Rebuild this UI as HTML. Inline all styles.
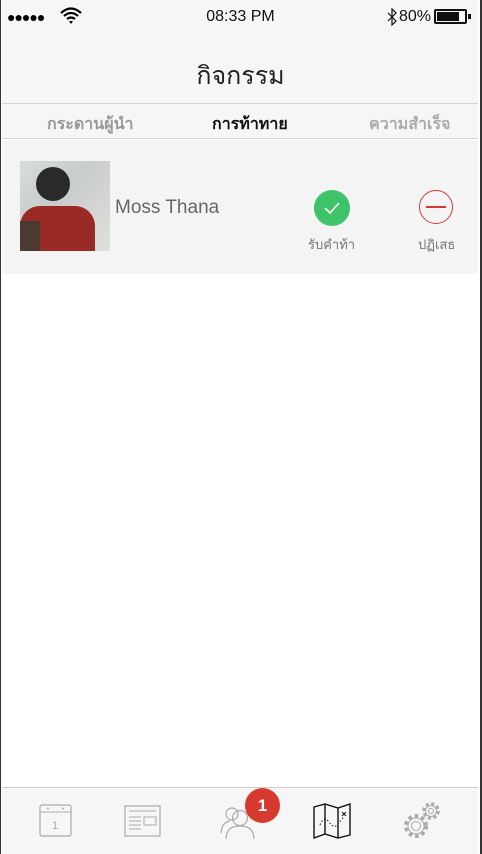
<!DOCTYPE html>
<html><head><meta charset="utf-8"><style>
*{margin:0;padding:0;box-sizing:border-box}
body{width:482px;height:854px;background:#fff;font-family:"Liberation Sans","Noto Sans CJK SC",sans-serif;position:relative;overflow:hidden;border-left:1px solid #333;border-right:2px solid #333}
.abs{position:absolute}
</style></head><body>
<div class="abs" style="left:1px;right:2px;top:0;height:103px;background:#f6f6f6"></div>
<div class="abs" style="left:6px;top:9px;font-size:14px;letter-spacing:-1px;color:#000">●●●●●</div>
<svg class="abs" style="left:59px;top:7px" width="22" height="18" viewBox="0 0 22 18"><path d="M1 6Q11 -3 21 6M4 9Q11 3 18 9M7 12Q11 9 15 12" stroke="#000" stroke-width="2.2" fill="none"/><path d="M9 14L11 17L13 14Z" fill="#000"/></svg>
<div class="abs" style="left:0;right:0;top:8px;text-align:center;font-size:16px;color:#111">08:33 PM</div>
<svg class="abs" style="left:385px;top:8px" width="12" height="18"><path d="M2 5L10 13L6 17V1L10 5L2 13" stroke="#111" stroke-width="1.2" fill="none"/></svg>
<div class="abs" style="left:398px;top:8px;font-size:16px;color:#111">80%</div>
<div class="abs" style="left:433px;top:9px;width:33px;height:15px;border:2px solid #111;border-radius:2px"><div style="margin:1px;width:22px;height:9px;background:#111"></div></div>
<div class="abs" style="left:467px;top:14px;width:3px;height:5px;background:#111"></div>
<div class="abs" style="left:0;right:0;top:56px;text-align:center;font-size:25px;color:#222;font-weight:500">กิจกรรม</div>
<div class="abs" style="left:1px;right:2px;top:103px;height:36px;background:#f6f6f6;border-top:1px solid #d5d5d5;border-bottom:1px solid #d5d5d5"></div>
<div class="abs" style="left:46px;top:112px;font-size:16px;font-weight:bold;color:#999">กระดานผู้นำ</div>
<div class="abs" style="left:211px;top:112px;font-size:16px;font-weight:bold;color:#111">การท้าทาย</div>
<div class="abs" style="left:368px;top:112px;font-size:16px;font-weight:bold;color:#aaa">ความสำเร็จ</div>
<div class="abs" style="left:1px;right:2px;top:140px;height:134px;background:#f4f4f4"></div>
<div class="abs" style="left:19px;top:161px;width:90px;height:90px;background:linear-gradient(135deg,#d8dcdc 0%,#c8cccc 40%,#e0e0dc 100%);overflow:hidden">
<div style="position:absolute;left:16px;top:6px;width:34px;height:34px;border-radius:50%;background:#2a2a2a"></div>
<div style="position:absolute;left:0;top:45px;width:75px;height:45px;background:#9a2a25;border-radius:20px 20px 0 0"></div>
<div style="position:absolute;left:0;top:60px;width:20px;height:30px;background:#4a3a30"></div>
</div>
<div class="abs" style="left:114px;top:197px;font-size:19px;color:#666">Moss Thana</div>
<div class="abs" style="left:313px;top:190px;width:36px;height:36px;border-radius:50%;background:#3ec368"></div>
<svg class="abs" style="left:313px;top:190px" width="36" height="36"><path d="M11 18L16 23L25 13" stroke="#fff" stroke-width="1.6" fill="none"/></svg>
<div class="abs" style="left:418px;top:190px;width:34px;height:34px;border-radius:50%;border:1.5px solid #d23a32"></div>
<div class="abs" style="left:425px;top:206px;width:20px;height:1.5px;background:#d23a32"></div>
<div class="abs" style="left:307px;top:234px;font-size:13px;color:#777">รับคำท้า</div>
<div class="abs" style="left:417px;top:234px;font-size:13px;color:#777">ปฏิเสธ</div>
<div class="abs" style="left:1px;right:2px;top:787px;height:67px;background:#f6f6f6;border-top:1px solid #ccc"></div>
<svg class="abs" style="left:38px;top:803px" width="34" height="34"><rect x="1" y="2" width="31" height="31" rx="2" fill="none" stroke="#aaa" stroke-width="1.2"/><line x1="1" y1="9" x2="32" y2="9" stroke="#aaa"/><circle cx="9" cy="5.5" r="1" fill="#aaa"/><circle cx="24" cy="5.5" r="1" fill="#aaa"/><text x="16" y="26" font-size="11" fill="#aaa" text-anchor="middle" font-family="Liberation Sans">1</text></svg>
<svg class="abs" style="left:123px;top:805px" width="37" height="32"><rect x="1" y="1" width="35" height="30" fill="none" stroke="#aaa" stroke-width="1.2"/><path d="M5 6H32M5 12H17M5 16H17M5 20H17M5 24H17M20 12H32V20H20Z" stroke="#aaa" fill="none"/></svg>
<svg class="abs" style="left:219px;top:805px" width="44" height="36"><circle cx="20" cy="13" r="7.5" fill="none" stroke="#aaa" stroke-width="1.2"/><path d="M6 34Q6 21 20 21Q34 21 34 34" fill="none" stroke="#aaa" stroke-width="1.2"/><circle cx="12" cy="9" r="6" fill="none" stroke="#aaa" stroke-width="1.2"/><path d="M1 28Q2 17 10 16" fill="none" stroke="#aaa" stroke-width="1.2"/></svg>
<div class="abs" style="left:244px;top:788px;width:35px;height:35px;border-radius:50%;background:#d6392e;color:#fff;font-weight:bold;font-size:17px;text-align:center;line-height:35px">1</div>
<svg class="abs" style="left:311px;top:803px" width="40" height="36"><path d="M2 4L13 1L26 5L38 1V32L26 35L13 31L2 35Z M13 1V31M26 5V35" fill="none" stroke="#111" stroke-width="1.4"/><path d="M8 22Q12 12 17 19T25 22T32 14" fill="none" stroke="#111" stroke-dasharray="1.5 2"/><path d="M30 9L34 13M34 9L30 13" stroke="#111"/></svg>
<svg class="abs" style="left:399px;top:800px" width="42" height="42"><circle cx="16" cy="26" r="10" fill="none" stroke="#aaa" stroke-width="4" stroke-dasharray="3.5 3"/><circle cx="16" cy="26" r="8" fill="#f6f6f6" stroke="#aaa" stroke-width="1"/><circle cx="16" cy="26" r="4.5" fill="none" stroke="#aaa"/><circle cx="31" cy="11" r="7" fill="none" stroke="#aaa" stroke-width="3.5" stroke-dasharray="3 2.5"/><circle cx="31" cy="11" r="5.5" fill="#f6f6f6" stroke="#aaa" stroke-width="1"/><circle cx="31" cy="11" r="2.5" fill="none" stroke="#aaa"/></svg>
</body></html>
